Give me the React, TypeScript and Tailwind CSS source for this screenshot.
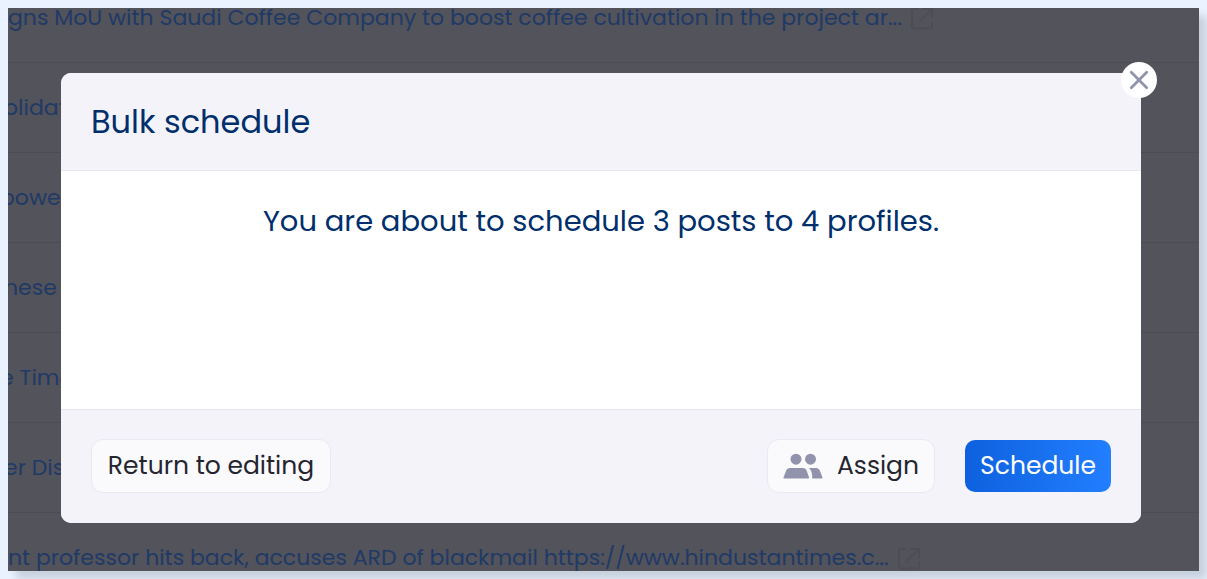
import React from 'react';

const posts = [
  {
    title: 'gns MoU with Saudi Coffee Company to boost coffee cultivation in the project ar...',
    shift: '',
    external: true,
  },
  { title: 'olidat', shift: '-ml-1', external: false },
  { title: 'power', shift: '-ml-2', external: false },
  { title: 'nese c', shift: '-ml-1', external: false },
  { title: 'e Time', shift: '-ml-2', external: false },
  { title: 'er Disc', shift: '-ml-1', external: false },
  {
    title: 'nt professor hits back, accuses ARD of blackmail https://www.hindustantimes.c...',
    shift: '',
    external: true,
  },
];

const ExternalIcon = () => (
  <svg
    className="h-6 w-6 shrink-0 text-[#4d4d56]"
    viewBox="0 0 24 24"
    fill="none"
    stroke="currentColor"
    strokeWidth="1.8"
    aria-hidden="true"
  >
    <path d="M8.500 3H3.500Q2 3 2 4.500V21Q2 22.500 3.500 22.500H20.500Q22 22.500 22 21V15.500M12.500 3H22V12M22 3L9 16" />
  </svg>
);

const PeopleIcon = () => (
  <svg className="h-[26px] w-10 shrink-0" viewBox="0 0 40 26" fill="#9193ad" aria-hidden="true">
    <circle cx="13" cy="6.200" r="5.500" />
    <circle cx="27.500" cy="6.200" r="5.500" />
    <path d="M7 15H20C22 15 23 16 23.600 17.600L26 24.200Q26.300 25.500 25 25.500H1.500Q.2 25.500 .6 24.200L3.200 17.600C4 16 5 15 7 15Z" />
    <path d="M26 15H33C35 15 36 16 36.800 17.600L39.400 24.200Q39.800 25.500 38.500 25.500H29.200C29.500 21 28.500 17.500 26 15Z" />
  </svg>
);

const CloseIcon = () => (
  <svg
    className="h-5 w-5"
    viewBox="0 0 20 20"
    fill="none"
    stroke="#9193ad"
    strokeWidth="2.800"
    strokeLinecap="round"
    aria-hidden="true"
  >
    <path d="M2.300 2.300L17.700 17.700M17.700 2.300L2.300 17.700" />
  </svg>
);

const PostList = () => (
  <ul className="absolute inset-x-0 -top-[35px]">
    {posts.map((post) => (
      <li key={post.title} className="flex h-[90px] items-center gap-2 border-b border-[#4c4c55]">
        <a
          href="#post"
          className={`whitespace-nowrap text-[22px] leading-8 text-[#1f3a66] ${post.shift}`}
        >
          {post.title}
        </a>
        {post.external && <ExternalIcon />}
      </li>
    ))}
  </ul>
);

interface ButtonProps extends React.ButtonHTMLAttributes<HTMLButtonElement> {
  icon?: React.ReactNode;
}

const SecondaryButton = ({ icon, className = '', children, ...props }: ButtonProps) => (
  <button
    type="button"
    className={[
      'flex h-[54px] items-center justify-center gap-3.5 whitespace-nowrap rounded-xl',
      'border border-[#e9e9f3] bg-[#fafafd] text-[25px] leading-8 text-[#252530]',
      className,
    ].join(' ')}
    {...props}
  >
    {icon}
    {children}
  </button>
);

export default function App() {
  return (
    <div className="flex min-h-screen bg-[#eaf2ff] p-2 font-['Poppins','Inter',sans-serif]">
      <div className="relative flex-1 bg-[#53535b] pb-12 pl-[53px] pr-[58px] pt-[65px] shadow-[8px_8px_8px_#c7d0dd]">
        <div className="absolute inset-0 overflow-hidden">
          <PostList />
        </div>

        <div
          role="dialog"
          aria-labelledby="bulk-title"
          className="relative flex h-full flex-col rounded-[10px] bg-white"
        >
          <header className="flex h-[98px] items-center rounded-t-[10px] border-b border-[#e6e6f0] bg-[#f4f3fa] px-[30px]">
            <h1 id="bulk-title" className="text-[32px] leading-10 text-[#002f6c]">
              Bulk schedule
            </h1>
          </header>

          <main className="min-h-[200px] flex-1 px-[30px] pt-[30px] text-center">
            <p className="text-[29px] leading-10 text-[#002f6c]">
              You are about to schedule 3 posts to 4 profiles.
            </p>
          </main>

          <footer className="flex h-[114px] items-center gap-[30px] rounded-b-[10px] border-t border-[#e6e6f0] bg-[#f4f3fa] px-[30px] pb-0.5">
            <SecondaryButton className="w-60">Return to editing</SecondaryButton>
            <SecondaryButton icon={<PeopleIcon />} className="ml-auto w-[168px]">
              Assign
            </SecondaryButton>
            <button
              type="button"
              className="h-[52px] w-[146px] rounded-[10px] bg-linear-to-r from-[#0d61de] to-[#227fff] text-[25px] leading-8 text-white"
            >
              Schedule
            </button>
          </footer>

          <button
            type="button"
            aria-label="Close"
            className="absolute -right-4 -top-[11px] flex h-9 w-9 items-center justify-center rounded-full bg-white"
          >
            <CloseIcon />
          </button>
        </div>
      </div>
    </div>
  );
}
